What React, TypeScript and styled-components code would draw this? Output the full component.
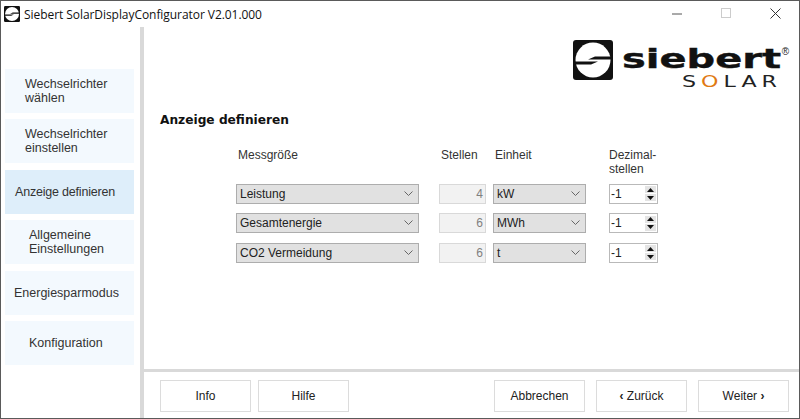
import styled, { createGlobalStyle } from 'styled-components';

const GlobalStyle = createGlobalStyle`
    html, body {
        margin: 0;
        padding: 0;
        background: #fff;
    }
    * {
        box-sizing: border-box;
    }
`;

const steps = [
    { label: <>Wechselrichter<br />wählen</>, indent: 20 },
    { label: <>Wechselrichter<br />einstellen</>, indent: 20 },
    { label: 'Anzeige definieren', indent: 10, active: true },
    { label: <>Allgemeine<br />Einstellungen</>, indent: 24 },
    { label: 'Energiesparmodus', indent: 9 },
    { label: 'Konfiguration', indent: 24 },
];

const rows = [
    { value: 'Leistung', digits: '4', unit: 'kW' },
    { value: 'Gesamtenergie', digits: '6', unit: 'MWh' },
    { value: 'CO2 Vermeidung', digits: '6', unit: 't' },
];

const Chevron = () => (
    <svg width="9" height="6" viewBox="0 0 9 6">
        <path d="M0.5 0.5 L4.5 4.5 L8.5 0.5" fill="none" stroke="#666" strokeWidth="1" />
    </svg>
);

const BrandMark = ({ size }: { size: number }) => (
    <svg width={size} height={size} viewBox="0 0 40 40">
        <rect width="40" height="40" rx="3" fill="#111" />
        <circle cx="20" cy="20" r="17.5" fill="#fff" />
        <path d="M2 21.5 H25 L18 24.5 H2 Z M38 16.5 H22 L15 19.5 H38 Z" fill="#111" />
    </svg>
);

const Spinner = () => (
    <SpinColumn>
        <SpinArrow>
            <svg width="7" height="4" viewBox="0 0 7 4"><path d="M3.5 0 L7 4 H0 Z" fill="#111" /></svg>
        </SpinArrow>
        <SpinArrow>
            <svg width="7" height="4" viewBox="0 0 7 4"><path d="M3.5 4 L7 0 H0 Z" fill="#111" /></svg>
        </SpinArrow>
    </SpinColumn>
);

const App = () => {
    return (
        <>
            <GlobalStyle />
            <Window>
                <TitleBar>
                    <TitleIcon><BrandMark size={16} /></TitleIcon>
                    <TitleText>Siebert SolarDisplayConfigurator V2.01.000</TitleText>
                    <WindowControls>
                        <ControlBox>
                            <svg width="11" height="11" viewBox="0 0 11 11"><path d="M0 6 H10" stroke="#555" strokeWidth="1" /></svg>
                        </ControlBox>
                        <ControlBox>
                            <svg width="11" height="11" viewBox="0 0 11 11"><rect x="0.5" y="0.5" width="9" height="9" fill="none" stroke="#ccc" /></svg>
                        </ControlBox>
                        <ControlBox>
                            <svg width="11" height="11" viewBox="0 0 11 11"><path d="M0.5 0.5 L10.5 10.5 M10.5 0.5 L0.5 10.5" stroke="#333" strokeWidth="1" /></svg>
                        </ControlBox>
                    </WindowControls>
                </TitleBar>
                <Body>
                    <Sidebar>
                        {steps.map((step, i) => (
                            <StepButton key={i} $indent={step.indent} $active={step.active}>{step.label}</StepButton>
                        ))}
                    </Sidebar>
                    <Main>
                        <Content>
                            <LogoRow>
                                <BrandMark size={40} />
                                <Wordmark>
                                    <SiebertLine>
                                        <Siebert>siebert</Siebert>
                                        <Registered>®</Registered>
                                    </SiebertLine>
                                    <SolarLine>
                                        <Solar>S<SolarAccent>O</SolarAccent>LAR</Solar>
                                    </SolarLine>
                                </Wordmark>
                            </LogoRow>
                            <Heading>Anzeige definieren</Heading>
                            <FormGrid>
                                <ColumnLabel>Messgröße</ColumnLabel>
                                <ColumnLabel>Stellen</ColumnLabel>
                                <ColumnLabel>Einheit</ColumnLabel>
                                <ColumnLabel $flush>Dezimal-<br />stellen</ColumnLabel>
                                {rows.map((row) => (
                                    <FormRow key={row.value}>
                                        <SelectBox $width={183}>{row.value}<Chevron /></SelectBox>
                                        <DigitsBox>{row.digits}</DigitsBox>
                                        <SelectBox $width={93}>{row.unit}<Chevron /></SelectBox>
                                        <SpinBox>-1<Spinner /></SpinBox>
                                    </FormRow>
                                ))}
                            </FormGrid>
                        </Content>
                        <Footer>
                            <FooterGroup>
                                <FooterButton>Info</FooterButton>
                                <FooterButton>Hilfe</FooterButton>
                            </FooterGroup>
                            <FooterGroup $gap={11}>
                                <FooterButton>Abbrechen</FooterButton>
                                <FooterButton><span><Caret>&lsaquo;</Caret> Zurück</span></FooterButton>
                                <FooterButton><span>Weiter <Caret>&rsaquo;</Caret></span></FooterButton>
                            </FooterGroup>
                        </Footer>
                    </Main>
                </Body>
            </Window>
        </>
    );
};

const Window = styled.div`
    width: 800px;
    height: 419px;
    display: flex;
    flex-direction: column;
    border: 1px solid #5a5a5a;
    background: #fff;
    font-family: "Liberation Sans", Arial, sans-serif;
    font-size: 12px;
    color: #222;
    overflow: hidden;
`;
const TitleBar = styled.div`
    display: flex;
    align-items: center;
    height: 26px;
    flex-shrink: 0;
    padding-left: 3px;
`;
const TitleIcon = styled.div`
    display: flex;
    width: 20px;
`;
const TitleText = styled.div`
    font-family: "Open Sans", "Liberation Sans", sans-serif;
    font-size: 12px;
    letter-spacing: -0.06px;
    color: #111;
    white-space: nowrap;
`;
const WindowControls = styled.div`
    display: flex;
    align-self: flex-start;
    margin-left: auto;
`;
const ControlBox = styled.div`
    display: flex;
    align-items: center;
    justify-content: center;
    width: 46px;
    height: 25px;
    margin-right: 3px;
    &:last-child {
        margin-right: 1px;
    }
`;
const Body = styled.div`
    display: flex;
    flex: 1;
    min-height: 0;
`;
const Sidebar = styled.div`
    display: flex;
    flex-direction: column;
    gap: 6.4px;
    width: 139px;
    flex-shrink: 0;
    padding: 42px 6px 0 4px;
`;
const StepButton = styled.div<{ $indent: number; $active?: boolean }>`
    display: flex;
    align-items: center;
    height: 44px;
    padding-left: ${({ $indent }) => $indent}px;
    font-size: 12.5px;
    line-height: 14px;
    letter-spacing: ${({ $active }) => ($active ? '-0.2px' : '0')};
    color: #333;
    background: ${({ $active }) => ($active ? '#deeefa' : '#f3f9fe')};
`;
const Main = styled.div`
    display: flex;
    flex-direction: column;
    flex: 1;
    min-width: 0;
    border-left: 4px solid #d9d9d9;
`;
const Content = styled.div`
    flex: 1;
    min-height: 0;
    padding: 13px 10px 0 16px;
`;
const LogoRow = styled.div`
    display: flex;
    justify-content: flex-end;
    gap: 9px;
    height: 44px;
`;
const Wordmark = styled.div`
    display: flex;
    flex-direction: column;
    width: 167px;
`;
const SiebertLine = styled.div`
    display: flex;
    align-items: flex-start;
    justify-content: space-between;
    height: 36px;
    padding-top: 4px;
`;
const Siebert = styled.div`
    font-family: "DejaVu Sans", sans-serif;
    font-weight: 700;
    font-size: 27px;
    line-height: 30px;
    color: #111;
    -webkit-text-stroke: 0.4px #111;
    transform: scaleX(1.48);
    transform-origin: left center;
`;
const Registered = styled.span`
    margin-top: 2px;
    font-size: 10px;
    line-height: 12px;
    color: #222;
`;
const SolarLine = styled.div`
    display: flex;
    padding-left: 60px;
`;
const Solar = styled.div`
    font-family: "DejaVu Sans", sans-serif;
    font-size: 15.5px;
    line-height: 16px;
    letter-spacing: 3.5px;
    color: #222;
    transform: scaleX(1.43);
    transform-origin: left center;
`;
const SolarAccent = styled.span`
    color: #e07a12;
`;
const Heading = styled.h1`
    margin: 28px 0 0;
    font-family: "DejaVu Sans", sans-serif;
    font-size: 12.2px;
    font-weight: 700;
    line-height: 16px;
    color: #111;
`;
const FormGrid = styled.div`
    display: grid;
    grid-template-columns: 203px 54px 116px 49px;
    margin: 20px 0 0 76px;
`;
const ColumnLabel = styled.div<{ $flush?: boolean }>`
    height: 35.5px;
    line-height: 14px;
    padding-left: ${({ $flush }) => ($flush ? 0 : 2)}px;
    white-space: nowrap;
    color: #333;
`;
const FormRow = styled.div`
    display: contents;
`;
const SelectBox = styled.div<{ $width: number }>`
    display: flex;
    align-items: center;
    justify-content: space-between;
    width: ${({ $width }) => $width}px;
    height: 20px;
    margin-bottom: 9.5px;
    padding: 0 5px 0 3px;
    background: #e1e1e1;
    border: 1px solid #adadad;
    color: #222;
`;
const DigitsBox = styled.div`
    display: flex;
    align-items: center;
    justify-content: flex-end;
    width: 47px;
    height: 20px;
    padding-right: 2px;
    background: #f2f2f2;
    border: 1px solid #d9d9d9;
    color: #808080;
`;
const SpinBox = styled.div`
    display: flex;
    align-items: center;
    justify-content: space-between;
    width: 49px;
    height: 20px;
    padding: 0 1px;
    background: #fff;
    border: 1px solid #b9b9b9;
    color: #222;
`;
const SpinColumn = styled.div`
    display: flex;
    flex-direction: column;
    gap: 1px;
    width: 11px;
`;
const SpinArrow = styled.div`
    display: flex;
    align-items: center;
    justify-content: center;
    height: 7px;
    background: #e4e4e4;
`;
const Footer = styled.div`
    display: flex;
    justify-content: space-between;
    height: 49px;
    flex-shrink: 0;
    padding: 8px 10px 0 16px;
    border-top: 3px solid #d9d9d9;
`;
const FooterGroup = styled.div<{ $gap?: number }>`
    display: flex;
    gap: ${({ $gap }) => $gap ?? 7}px;
`;
const FooterButton = styled.div`
    display: flex;
    align-items: center;
    justify-content: center;
    width: 91px;
    height: 32px;
    background: #fff;
    border: 1px solid #dcdcdc;
    color: #222;
`;
const Caret = styled.b`
    font-weight: 700;
`;

export default App;
